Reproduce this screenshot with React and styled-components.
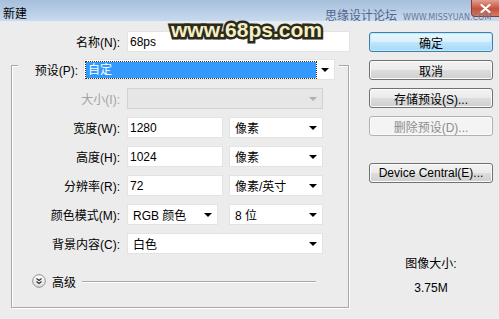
import styled, { createGlobalStyle } from "styled-components"

const FONT = `"Liberation Sans", "Noto Sans CJK SC", sans-serif`;

const Global = createGlobalStyle`
  html, body {
    margin: 0;
    padding: 0;
    background: #ececec;
  }
`;

const Window = styled.div`
  position: relative;
  width: 499px;
  height: 319px;
  overflow: hidden;
  background: #ececec;
  font-family: ${FONT};
  font-size: 12px;
  color: #000;
`;

const TitleBar = styled.div`
  height: 22px;
  box-sizing: border-box;
  display: flex;
  align-items: flex-start;
  background: linear-gradient(#a6bfdc, #c8daee);
  border-bottom: 1px solid #e4edf6;
`;

const Title = styled.span`
  padding: 4px 0 0 3px;
  font-size: 12px;
`;

const CloseBtn = styled.div`
  margin-left: auto;
  width: 27px;
  height: 16px;
  border-radius: 0 0 0 4px;
  background: linear-gradient(#e0a090, #c7503e 55%, #d77a60);
  border: 1px solid #8a3a30;
  border-top: none;
  border-right: none;
  display: flex;
  align-items: center;
  justify-content: center;
`;

const Watermark = styled.div`
  position: absolute;
  left: 171px;
  top: 19px;
  line-height: 1;
  font-family: "Liberation Sans", sans-serif;
  font-weight: bold;
  font-size: 21px;
  color: #f4efc4;
  -webkit-text-stroke: 5px #2c2a1c;
  paint-order: stroke fill;
  pointer-events: none;
`;

const SiteMark = styled.div`
  position: absolute;
  left: 325px;
  top: 6px;
  display: flex;
  align-items: baseline;
  gap: 6px;
  color: #52648a;
  pointer-events: none;
`;

const SiteName = styled.span`
  font-family: "Noto Sans CJK SC", sans-serif;
  font-size: 12px;
`;

const SiteUrl = styled.span`
  font-family: "DejaVu Sans", sans-serif;
  font-size: 8px;
  color: #6a7898;
`;

const Body = styled.div`
  display: flex;
  padding-top: 9px;
`;

const LeftCol = styled.div`
  width: 350px;
`;

const NameRow = styled.div`
  display: flex;
  align-items: center;
  height: 21px;
`;

const Label = styled.span`
  width: ${p => p.$w}px;
  text-align: right;
  flex-shrink: 0;
  margin-right: ${p => p.$gap ?? 7}px;
  color: ${p => (p.$disabled ? "#a3a3a3" : "#000")};
  white-space: nowrap;
`;

const Field = styled.div`
  position: relative;
  box-sizing: border-box;
  width: ${p => (p.$w ? `${p.$w}px` : "auto")};
  flex: ${p => (p.$w ? "none" : "1")};
  height: 21px;
  margin-left: ${p => p.$ml ?? 0}px;
  background: ${p => (p.$disabled ? "#e6e6e6" : "#fff")};
  border: 1px solid ${p => (p.$disabled ? "#d2d2d2" : "#e3e3e3")};
  display: flex;
  align-items: center;
  padding-left: ${p => p.$pad ?? 2}px;
  padding-right: 14px;
  white-space: nowrap;
`;

const Arrow = styled.span`
  position: absolute;
  right: 5px;
  top: 8px;
  width: 0;
  height: 0;
  border-left: 4px solid transparent;
  border-right: 4px solid transparent;
  border-top: 4px solid ${p => (p.$disabled ? "#b0b0b0" : "#000")};
`;

const GroupBox = styled.div`
  box-sizing: border-box;
  margin: 13px 0 0 11px;
  width: 338px;
  height: 243px;
  border: 1px solid #a8a8a8;
  box-shadow: inset 1px 1px 0 #fff, 1px 1px 0 #fff;
`;

const PresetRow = styled.div`
  display: flex;
  align-items: center;
  height: 21px;
  margin: -7px 9px 0 6px;
  background: #ececec;
`;

const Highlight = styled.span`
  flex: 1;
  height: 16px;
  line-height: 16px;
  background: #3399ff;
  color: #fff;
  padding-left: 2px;
  outline: 1px dotted #333;
  margin-right: 4px;
`;

const Rows = styled.div`
  display: flex;
  flex-direction: column;
  gap: 8px;
  margin-top: 8px;
`;

const Row = styled.div`
  display: flex;
  align-items: center;
  gap: 6px;
`;

const RowLabel = styled(Label)`
  margin-right: 1px;
`;

const Advanced = styled.div`
  display: flex;
  align-items: center;
  margin-top: 20px;
  padding: 0 32px 0 20px;
  height: 14px;
`;

const AdvText = styled.span`
  margin: 0 6px;
`;

const EtchLine = styled.div`
  flex: 1;
  height: 1px;
  background: #a8a8a8;
  box-shadow: 0 1px 0 #fff;
`;

const RightCol = styled.div`
  width: 124px;
  margin-left: 19px;
  padding-top: 1px;
  display: flex;
  flex-direction: column;
  gap: 8px;
`;

const Button = styled.div`
  box-sizing: border-box;
  height: 20px;
  margin-top: ${p => p.$gapBefore ?? 0}px;
  border-radius: 3px;
  display: flex;
  align-items: center;
  justify-content: center;
  font-family: ${p => (p.$latin ? `"Liberation Sans", sans-serif` : FONT)};
  border: 1px solid ${p => (p.$primary ? "#3c7fb1" : p.$disabled ? "#adb2b5" : "#707070")};
  color: ${p => (p.$disabled ? "#8d8d8d" : "#000")};
  background: ${p =>
    p.$disabled
      ? "#f4f4f4"
      : p.$primary
      ? "linear-gradient(#eaf6fd 0%, #d9f0fc 50%, #bee6fd 51%, #a7d9f5 100%)"
      : "linear-gradient(#f2f2f2 0%, #ebebeb 50%, #dddddd 51%, #cfcfcf 100%)"};
  box-shadow: inset 0 0 0 1px ${p => (p.$primary ? "#bfe9fb" : p.$disabled ? "#fafafa" : "#fcfcfc")};
`;

const SizeInfo = styled.div`
  margin-top: 63px;
  display: flex;
  flex-direction: column;
  align-items: center;
  gap: 10px;
  color: #000;
`;

const Chevron = () => (
  <svg width="14" height="14" viewBox="0 0 14 14">
    <defs>
      <linearGradient id="cg" x1="0" y1="0" x2="0" y2="1">
        <stop offset="0" stopColor="#ffffff" />
        <stop offset="1" stopColor="#dcdcdc" />
      </linearGradient>
    </defs>
    <circle cx="7" cy="7" r="6.3" fill="url(#cg)" stroke="#8f8f8f" strokeWidth="1" />
    <polyline points="4.5,4.5 7,6.5 9.5,4.5" fill="none" stroke="#333" strokeWidth="1.2" />
    <polyline points="4.5,7.5 7,9.5 9.5,7.5" fill="none" stroke="#333" strokeWidth="1.2" />
  </svg>
);

const CloseX = () => (
  <svg width="11" height="9" viewBox="0 0 11 9">
    <path d="M1.5 1 L9.5 8 M9.5 1 L1.5 8" stroke="#fff" strokeWidth="2.2" strokeLinecap="round" />
  </svg>
);

export default function App() {
  return (
    <Window>
      <Global />
      <TitleBar>
        <Title>新建</Title>
        <CloseBtn><CloseX /></CloseBtn>
      </TitleBar>
      <Body>
        <LeftCol>
          <NameRow>
            <Label $w={120}>名称(N):</Label>
            <Field>68ps</Field>
          </NameRow>
          <GroupBox>
            <PresetRow>
              <Label $w={60} $gap={5}>预设(P):</Label>
              <Field $w={252} $pad={2}>
                <Highlight>自定</Highlight>
                <Arrow />
              </Field>
            </PresetRow>
            <Rows>
              <Row>
                <RowLabel $w={108} $disabled>大小(I):</RowLabel>
                <Field $w={196} $disabled><Arrow $disabled /></Field>
              </Row>
              <Row>
                <RowLabel $w={108}>宽度(W):</RowLabel>
                <Field $w={96}>1280</Field>
                <Field $w={94} $pad={5}>像素<Arrow /></Field>
              </Row>
              <Row>
                <RowLabel $w={108}>高度(H):</RowLabel>
                <Field $w={96}>1024</Field>
                <Field $w={94} $pad={5}>像素<Arrow /></Field>
              </Row>
              <Row>
                <RowLabel $w={108}>分辨率(R):</RowLabel>
                <Field $w={96}>72</Field>
                <Field $w={94} $pad={5}>像素/英寸<Arrow /></Field>
              </Row>
              <Row>
                <RowLabel $w={108}>颜色模式(M):</RowLabel>
                <Field $w={91} $pad={5}>RGB 颜色<Arrow /></Field>
                <Field $w={94} $ml={5} $pad={5}>8 位<Arrow /></Field>
              </Row>
              <Row>
                <RowLabel $w={108}>背景内容(C):</RowLabel>
                <Field $w={196} $pad={5}>白色<Arrow /></Field>
              </Row>
            </Rows>
            <Advanced>
              <Chevron />
              <AdvText>高级</AdvText>
              <EtchLine />
            </Advanced>
          </GroupBox>
        </LeftCol>
        <RightCol>
          <Button $primary>确定</Button>
          <Button>取消</Button>
          <Button>存储预设(S)...</Button>
          <Button $disabled>删除预设(D)...</Button>
          <Button $latin $gapBefore={19}>Device Central(E)...</Button>
          <SizeInfo>
            <span>图像大小:</span>
            <span>3.75M</span>
          </SizeInfo>
        </RightCol>
      </Body>
      <Watermark>www.68ps.com</Watermark>
      <SiteMark>
        <SiteName>思缘设计论坛</SiteName>
        <SiteUrl>WWW.MISSYUAN.COM</SiteUrl>
      </SiteMark>
    </Window>
  );
}
